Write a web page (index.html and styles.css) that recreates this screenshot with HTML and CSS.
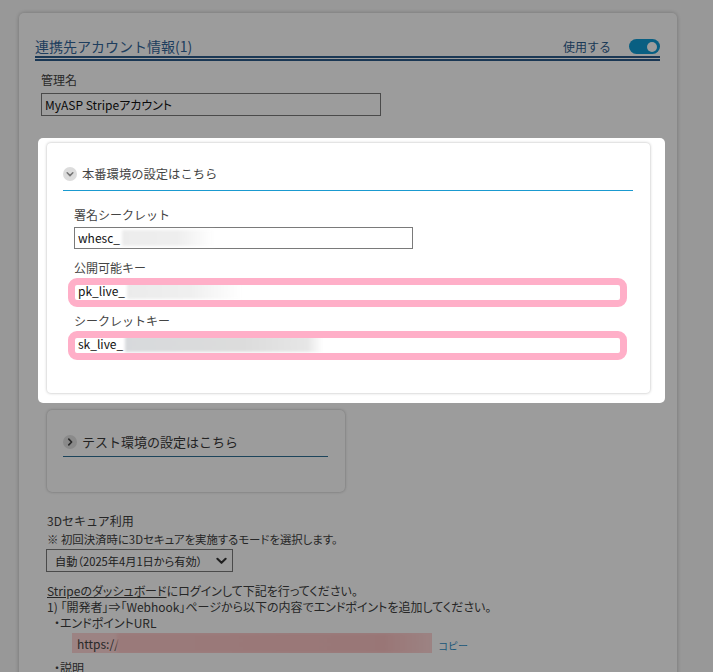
FILE: index.html
```html
<!DOCTYPE html>
<html lang="ja">
<head>
<meta charset="utf-8">
<title>連携先アカウント情報</title>
<link rel="stylesheet" href="styles.css">
</head>
<body>
<div class="page">
  <section class="panel">
    <div class="panel-head">
      <h2 class="panel-title">連携先アカウント情報(1)</h2>
      <div class="use">
        <span class="use-label">使用する</span>
        <span class="toggle"><span class="knob"></span></span>
      </div>
    </div>

    <div class="name-field">
      <div class="label">管理名</div>
      <div class="input input-name">MyASP Stripeアカウント</div>
    </div>

    <div class="spot">
      <div class="card card-live">
        <div class="card-head">
          <span class="circ"><svg viewBox="0 0 14 14" width="14" height="14"><polyline points="4.2,5.8 7,8.6 9.8,5.8" fill="none" stroke="#777" stroke-width="1.6" stroke-linecap="round" stroke-linejoin="round"/></svg></span>
          <span class="card-title">本番環境の設定はこちら</span>
        </div>
        <div class="fields">
          <div class="field">
            <div class="label">署名シークレット</div>
            <div class="input input-short">whesc_<span class="blur blur-a"></span></div>
          </div>
          <div class="field">
            <div class="label">公開可能キー</div>
            <div class="input input-long">pk_live_<span class="blur blur-b"></span><span class="mark"></span></div>
          </div>
          <div class="field">
            <div class="label">シークレットキー</div>
            <div class="input input-long">sk_live_<span class="blur blur-c"></span><span class="mark"></span></div>
          </div>
        </div>
      </div>
    </div>

    <div class="card card-test">
      <div class="card-head card-head-test">
        <span class="circ circ-test"><svg viewBox="0 0 14 14" width="14" height="14"><polyline points="5.8,4.2 8.6,7 5.8,9.8" fill="none" stroke="#444" stroke-width="1.7" stroke-linecap="round" stroke-linejoin="round"/></svg></span>
        <span class="card-title">テスト環境の設定はこちら</span>
      </div>
    </div>

    <div class="secure">
      <div class="line">3Dセキュア利用</div>
      <div class="line note">※ 初回決済時に3Dセキュアを実施するモードを選択します。</div>
      <div class="select">
        <span class="select-text">自動（2025年4月1日から有効）</span>
        <svg viewBox="0 0 12 8" width="11" height="8"><polyline points="1.5,1.5 6,6 10.5,1.5" fill="none" stroke="#333" stroke-width="2.2" stroke-linecap="round" stroke-linejoin="round"/></svg>
      </div>
      <div class="steps">
        <div class="line"><span class="ulink">Stripeのダッシュボード</span>にログインして下記を行ってください。</div>
        <div class="line">1) 「開発者」⇒「Webhook」ページから以下の内容でエンドポイントを追加してください。</div>
        <div class="line bullet">・エンドポイントURL</div>
        <div class="url-row">
          <div class="url-box"><span class="url-text">https://</span><span class="url-blur"></span></div>
          <span class="copy">コピー</span>
        </div>
        <div class="line bullet desc">・説明</div>
      </div>
    </div>
  </section>
</div>
<div class="overlay"></div>
</body>
</html>
```

FILE: styles.css
```css
html, body {
  margin: 0;
  padding: 0;
}
body {
  background: #f9f9f9;
  font-family: "Noto Sans CJK JP", "Noto Sans", sans-serif;
  color: #3e3e3e;
  font-size: 12px;
  overflow: hidden;
  height: 672px;
}
.page {
  padding-top: 13px;
}
.panel {
  margin-left: 19px;
  width: 658px;
  box-sizing: border-box;
  min-height: 900px;
  background: #fff;
  border-radius: 5px;
  box-shadow: 0 0 4px rgba(0,0,0,0.25);
  padding: 24px 17px 0 16px;
}
.panel-head {
  display: flex;
  align-items: center;
  justify-content: space-between;
  height: 19px;
  border-bottom: 5px double #2c5b8a;
}
.panel-title {
  margin: 0;
  font-size: 14px;
  font-weight: normal;
  line-height: 19px;
  color: #33669a;
}
.use {
  display: flex;
  align-items: center;
  gap: 18px;
}
.use-label {
  font-size: 12px;
  line-height: 16px;
  color: #2d5d8e;
}
.toggle {
  width: 31px;
  height: 15px;
  border-radius: 8px;
  background: #0f9bd4;
  display: flex;
  align-items: center;
  justify-content: flex-end;
  padding-right: 3px;
  box-sizing: border-box;
}
.knob {
  width: 10px;
  height: 10px;
  border-radius: 50%;
  background: #fff;
}
.label {
  font-size: 12px;
  line-height: 16px;
  color: #444;
}
.name-field {
  margin: 11px 0 0 6px;
}
.name-field .label {
  margin-bottom: 5px;
}
.input {
  box-sizing: border-box;
  height: 22px;
  border: 1px solid #7a7a7a;
  background: #fff;
  font-size: 12px;
  line-height: 20px;
  padding-left: 3px;
  color: #111;
  display: flex;
  align-items: center;
  position: relative;
}
.input-name {
  width: 340px;
  height: 23px;
  font-feature-settings: "palt";
}
.spot {
  position: relative;
  z-index: 20;
  background: #fff;
  border-radius: 5px;
  margin: 22px -5px 0 3px;
  padding: 5px 15px 10px 9px;
}
.card {
  background: #fff;
  border-radius: 4px;
  box-shadow: 0 0 3px rgba(0,0,0,0.3);
  box-sizing: border-box;
}
.card-live {
  padding: 23px 17px 38px 16px;
}
.card-head {
  display: flex;
  align-items: center;
  gap: 5px;
  height: 16px;
  padding-bottom: 8px;
  border-bottom: 1px solid #1a9ad0;
}
.circ {
  width: 14px;
  height: 14px;
  border-radius: 50%;
  background: #dcdcdc;
  display: flex;
}
.card-title {
  font-size: 12.3px;
  line-height: 16px;
  color: #444;
}
.fields {
  margin: 16px 0 0 11px;
  display: flex;
  flex-direction: column;
  gap: 11px;
}
.field .label {
  margin-bottom: 4px;
}
.input-short {
  width: 339px;
}
.input-long {
  width: 548px;
}
.blur {
  display: inline-block;
  height: 16px;
  filter: blur(1.5px);
}
.blur-a {
  width: 92px;
  margin-left: 2px;
  background: linear-gradient(90deg, #ececec, #eeeeee 60%, #ffffff);
}
.blur-b {
  width: 115px;
  margin-left: 2px;
  background: linear-gradient(90deg, #ebebeb, #efefef 55%, #ffffff);
}
.blur-c {
  width: 198px;
  margin-left: 2px;
  background: linear-gradient(90deg, #d7d9dc, #dcdcdc 60%, #e6e6e6 92%, #ffffff);
}
.mark {
  position: absolute;
  top: -3px;
  bottom: -6px;
  left: -7px;
  right: -6px;
  border: 7px solid #ffafc8;
  border-radius: 9px;
  pointer-events: none;
}
.card-test {
  margin: 7px 0 0 12px;
  width: 298px;
  padding: 24px 17px 35px 16px;
  border-radius: 5px;
}
.card-head-test {
  padding-bottom: 6px;
  border-bottom-color: #2f6f96;
}
.circ-test {
  background: #e2e2e2;
}
.card-head-test .card-title {
  font-size: 13px;
  color: #3a3a3a;
}
.secure {
  margin: 21px 0 0 12px;
}
.line {
  font-size: 12px;
  line-height: 16px;
  color: #3e3e3e;
  white-space: nowrap;
}
.steps .line {
  font-feature-settings: "palt";
}
.note {
  margin-top: 2px;
  font-size: 11.4px;
  font-feature-settings: "palt";
}
.select {
  margin: 2px 0 0 -1px;
  box-sizing: border-box;
  width: 187px;
  height: 23px;
  border: 1px solid #7a7a7a;
  background: #fff;
  display: flex;
  align-items: center;
  justify-content: space-between;
  padding: 0 5px 0 8px;
  color: #333;
}
.select-text {
  font-size: 11.2px;
  white-space: nowrap;
  font-feature-settings: "palt";
}
.steps {
  margin-top: 11px;
}
.ulink {
  text-decoration: underline;
}
.bullet {
  margin-left: 7px;
}
.url-row {
  display: flex;
  align-items: center;
  gap: 6px;
  margin: 2px 0 0 25px;
}
.url-box {
  width: 360px;
  height: 20px;
  display: flex;
  align-items: center;
  background: #ffd6d6;
  overflow: hidden;
}
.url-text {
  padding-left: 5px;
  width: 40px;
  font-size: 12px;
  color: #444;
  flex: none;
}
.url-blur {
  flex: 1;
  height: 20px;
  background: linear-gradient(90deg, #fcc8c8, #fbc2c2 85%, #ffd6d6);
  filter: blur(1.5px);
}
.copy {
  font-size: 10px;
  color: #2f90c8;
  margin-top: 4px;
}
.desc {
  margin-top: 7px;
}
.overlay {
  position: fixed;
  inset: 0;
  background: rgba(0,0,0,0.39);
  z-index: 10;
}
```
